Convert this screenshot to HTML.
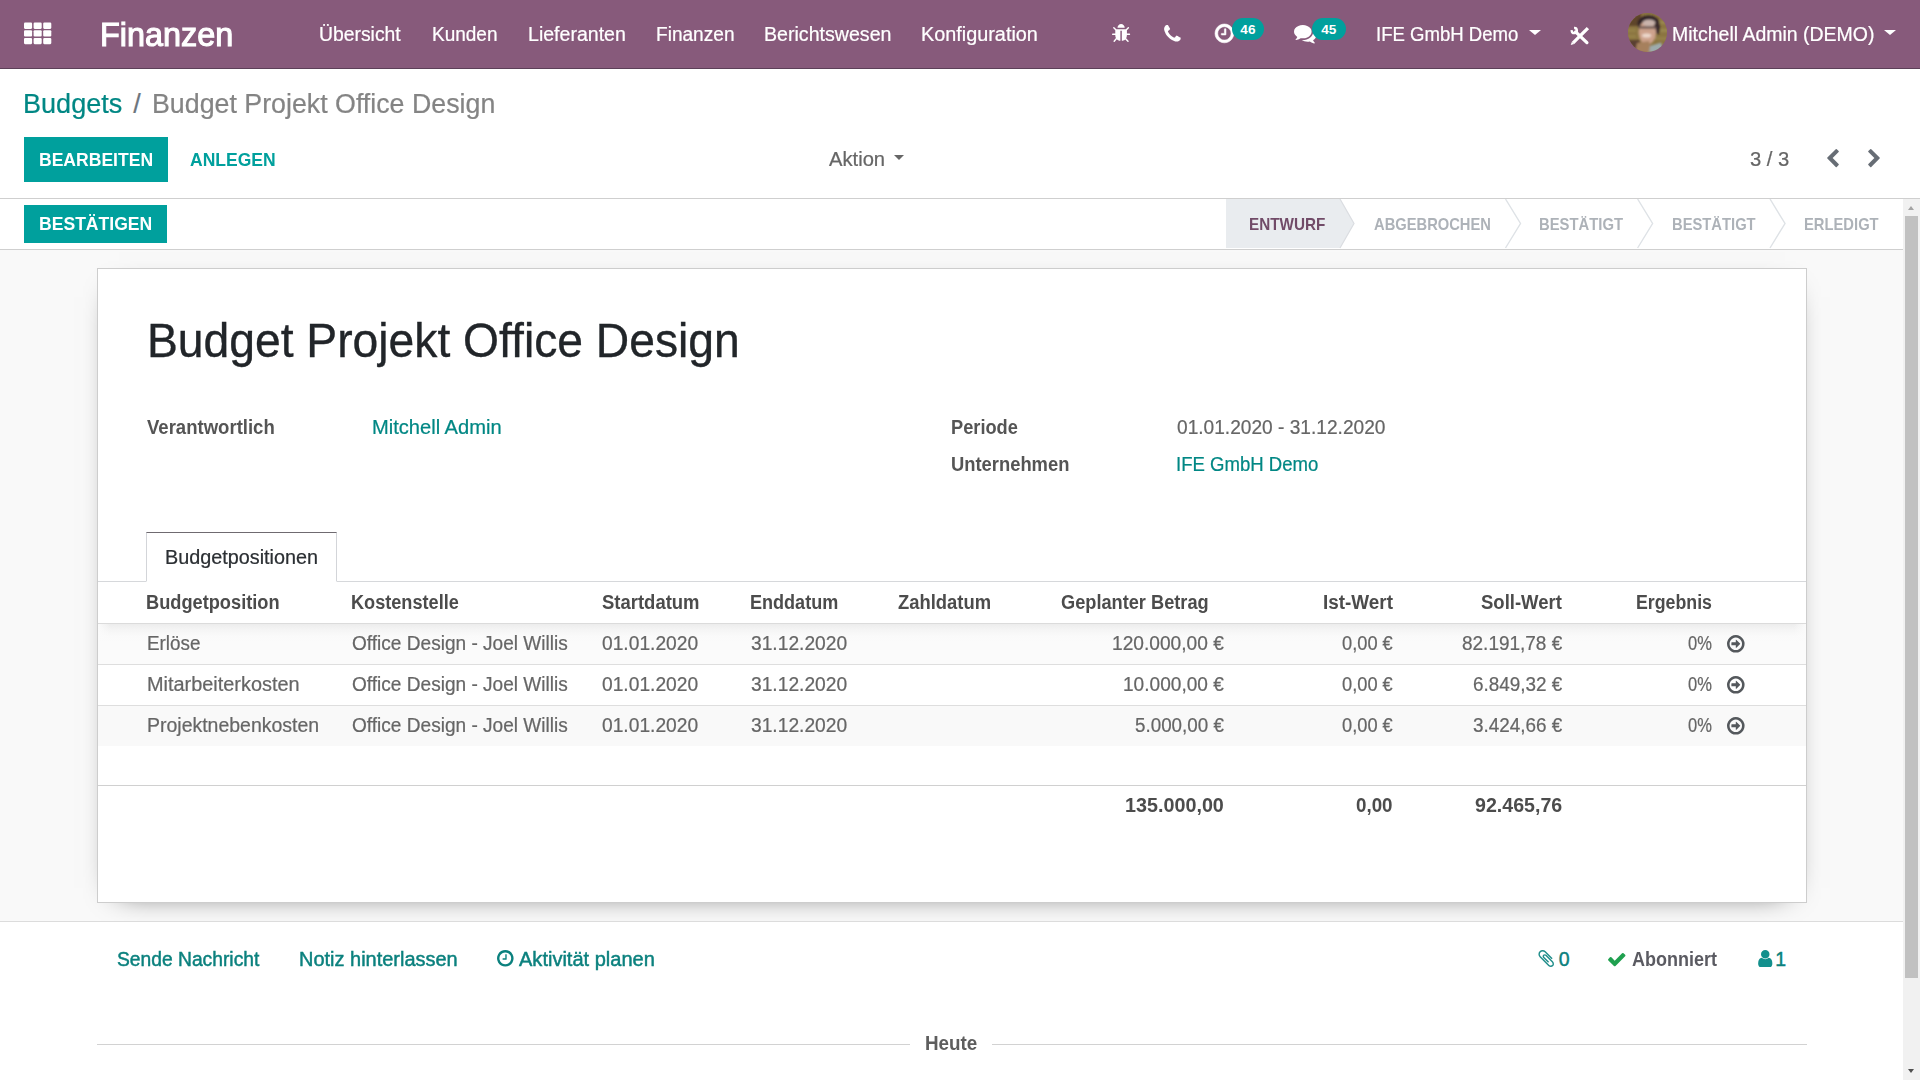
<!DOCTYPE html>
<html lang="de">
<head>
<meta charset="utf-8">
<title>Budget Projekt Office Design - Odoo</title>
<style>

*{box-sizing:border-box;margin:0;padding:0}
html,body{width:1920px;height:1080px;overflow:hidden;background:#fff}
body{font-family:"Liberation Sans",sans-serif;font-size:19.5px;color:#666;position:relative;-webkit-font-smoothing:antialiased}
a{text-decoration:none;color:inherit}
ul{list-style:none}
.abs{position:absolute;white-space:nowrap}
.abs,.txt,.o_dropdown_toggler_btn,.o_pager,.o_arrow_button,.o_form_sheet h1,.o_form_label,.o_field,.nav-link span,.o_list_table span,.lnk,.lnk2,.follow{transform-origin:0 50%;display:block}
svg{display:block;position:absolute;overflow:visible}

/* ---------- top navbar ---------- */
.o_main_navbar{position:absolute;left:0;top:0;width:1920px;height:69px;background:#875a7b;border-bottom:1px solid #5c4058;color:#fff}
.o_main_navbar .txt{position:absolute;white-space:nowrap;color:#fff;line-height:30px;font-size:19.5px}
.o_menu_brand{font-size:33px!important;line-height:44px!important}
.badge{position:absolute;top:18.2px;height:21.6px;border-radius:11px;background:#00a09d;color:#fff;font-weight:700;font-size:13.6px;line-height:21.6px;padding-top:0.8px;text-align:center}
.caret{position:absolute;width:0;height:0;border-left:6px solid transparent;border-right:6px solid transparent;border-top:5.8px solid #fff}

/* ---------- control panel ---------- */
.o_control_panel{position:absolute;left:0;top:69px;width:1920px;height:130px;background:#fff;border-bottom:1px solid #cfcfcf}
.breadcrumb{position:absolute;left:0;top:0;font-size:27px;line-height:40px;white-space:nowrap}
.breadcrumb li{position:absolute;top:0;white-space:nowrap}
.breadcrumb a{color:#008784}
.breadcrumb .sep{color:#6c757d}
.breadcrumb .active{color:#848484}
.btn{position:absolute;white-space:nowrap;font-size:18.2px;font-weight:700;text-transform:uppercase;text-align:center}
.btn-primary{background:#00a09d;color:#fff}
.btn-secondary{color:#00a09d;background:#fff}
.o_dropdown_toggler_btn{position:absolute;white-space:nowrap;color:#666;font-size:19.5px;line-height:30px}
.o_pager{position:absolute;white-space:nowrap;color:#666;line-height:30px}

/* ---------- scrollable content ---------- */
.o_content{position:absolute;left:0;top:199px;width:1903px;height:881px;background:#f9f9f9;overflow:hidden}
.o_form_statusbar{position:absolute;left:0;top:0;width:1903px;height:51px;background:#fff;border-bottom:1px solid #cfcfcf}
.o_statusbar_status{position:absolute;top:0;left:0;height:50px}
.o_arrow_button{position:absolute;top:0;white-space:nowrap;font-size:17px;font-weight:700;line-height:50px;color:#adb2b8;text-transform:uppercase}
.o_arrow_button.current{color:#714b68}

.o_form_sheet{position:absolute;left:97px;top:69px;width:1710px;height:635px;background:#fff;border:1px solid #cdcdcd;box-shadow:0 7px 30px -22px #000}
.o_form_sheet h1{position:absolute;font-weight:400;color:#212529;white-space:nowrap;font-size:47.5px;line-height:60px}
.o_form_label{position:absolute;font-weight:700;color:#555;white-space:nowrap;line-height:30px}
.o_field{position:absolute;white-space:nowrap;line-height:30px;color:#666}
.o_form_uri{color:#008784}
.nav-tabs{position:absolute;left:0;top:263px;width:1708px;height:50px;border-bottom:1px solid #d6d8db}
.nav-link{position:absolute;left:48px;top:0;width:191px;height:50px;border:1px solid #d3d5d9;border-top-color:#6f6a70;border-bottom-color:#fff;background:#fff;color:#2b2f33;line-height:30px}
.nav-link span{position:absolute;white-space:nowrap}

table.o_list_table{position:absolute;left:0;top:313px;width:1708px;border-collapse:separate;border-spacing:0;table-layout:fixed;font-size:19.5px}
.o_list_table th,.o_list_table td{padding:0;line-height:30px;white-space:nowrap;overflow:visible;text-align:left;vertical-align:top;font-weight:400;height:40px}
.o_list_table thead th{height:41px;font-weight:700;color:#4c4c4c}
.o_list_table tbody td{border-top:1px solid #dedede;height:41px}
.o_list_table tbody tr:first-child td{border-top-color:#dbdbdb}
.o_list_table tbody tr:first-child{background:linear-gradient(to right,#fbfbfb 0,rgba(251,251,251,0) 12px,rgba(251,251,251,0) 1696px,#fbfbfb 1708px),linear-gradient(#eaeaea 0,#eeeeee 2px,#f5f5f5 7px,#fafafa 13px,#fbfbfb 20px,#fbfbfb)}
.o_list_table tbody tr:nth-child(3){background:#f9f9f9}
.o_list_table .num{text-align:right}
.o_list_table span{display:inline-block!important;vertical-align:top;line-height:30px;position:relative}
.o_list_table tfoot td{border-top:1px solid #d0d0d0;font-weight:700;color:#4c4c4c;height:42px}
.o_list_table tr.spacer td{height:39px;border-top:0}
.o_list_table tr.spacer{border-top:none!important;background:#fff}
.icn{position:relative;display:inline-block;width:18px;height:18px;vertical-align:top}

/* ---------- chatter ---------- */
.o_chatter{position:absolute;left:0;top:722px;width:1903px;height:159px;background:#fff;border-top:1px solid #dcdcdc}
.o_chatter .lnk{position:absolute;white-space:nowrap;color:#0b817e;line-height:30px;-webkit-text-stroke:0.45px #0b817e}
.o_chatter .lnk2{position:absolute;white-space:nowrap;color:#008784;line-height:30px}
.o_chatter .follow{position:absolute;white-space:nowrap;color:#5b5b62;font-weight:700;line-height:30px}
.o_thread_date_separator{position:absolute;left:97px;top:122px;width:1710px;height:1px;background:#d2d2d2}
.o_thread_date{position:absolute;left:813px;top:-15px;width:82px;height:30px;background:#fff;text-align:center;font-weight:700;color:#5e5e5e;line-height:30px;white-space:nowrap}

/* ---------- fake scrollbar ---------- */
.sb{position:absolute;left:1903px;top:199px;width:17px;height:881px;background:#f1f1f1}
.sb .thumb{position:absolute;left:2px;top:17px;width:13px;height:762px;background:#c1c1c1}
.sb .up{position:absolute;left:5px;top:7px;width:0;height:0;border-left:3.5px solid transparent;border-right:3.5px solid transparent;border-bottom:4px solid #a3a3a3}
.sb .down{position:absolute;left:5px;top:870px;width:0;height:0;border-left:3.5px solid transparent;border-right:3.5px solid transparent;border-top:4px solid #505050}

/* Roboto regular renders a touch heavier than Liberation Sans: thicken slightly */
.o_main_navbar .txt,.breadcrumb .abs,.o_dropdown_toggler_btn,.o_pager,.o_field,.nav-link span,.o_list_table tbody span{-webkit-text-stroke:0.22px currentColor}
.o_form_sheet h1{-webkit-text-stroke:0.35px currentColor}
.o_list_table thead span{top:5px}
.o_list_table tbody span{top:4px}
.o_list_table tfoot span{top:4px}

</style>
</head>
<body>
<header class="o_main_navbar">
<a class="o_menu_toggle" title="Anwendungen"><svg class="fa fa-th" style="left:0;top:0;width:69px;height:69px" viewBox="0 0 69 69"><rect x="24.0" y="22.6" width="8.1" height="6.3" rx="1.1" fill="#fff"/><rect x="33.6" y="22.6" width="8.1" height="6.3" rx="1.1" fill="#fff"/><rect x="43.2" y="22.6" width="8.1" height="6.3" rx="1.1" fill="#fff"/><rect x="24.0" y="30.25" width="8.1" height="6.3" rx="1.1" fill="#fff"/><rect x="33.6" y="30.25" width="8.1" height="6.3" rx="1.1" fill="#fff"/><rect x="43.2" y="30.25" width="8.1" height="6.3" rx="1.1" fill="#fff"/><rect x="24.0" y="37.9" width="8.1" height="6.3" rx="1.1" fill="#fff"/><rect x="33.6" y="37.9" width="8.1" height="6.3" rx="1.1" fill="#fff"/><rect x="43.2" y="37.9" width="8.1" height="6.3" rx="1.1" fill="#fff"/></svg></a>
<a class="txt o_menu_brand" style="left:100.44px;top:13px;line-height:44px;transform:scaleX(0.981);-webkit-text-stroke:1.1px #fff;">Finanzen</a>
<ul class="o_menu_sections">
<li><a class="txt" style="left:319.06px;top:19px;line-height:30px;transform:scaleX(0.992);">Übersicht</a></li>
<li><a class="txt" style="left:432.38px;top:19px;line-height:30px;transform:scaleX(0.9742);">Kunden</a></li>
<li><a class="txt" style="left:528.05px;top:19px;line-height:30px;transform:scaleX(1.0028);">Lieferanten</a></li>
<li><a class="txt" style="left:655.57px;top:19px;line-height:30px;transform:scaleX(0.9786);">Finanzen</a></li>
<li><a class="txt" style="left:763.74px;top:19px;line-height:30px;transform:scaleX(1.0051);">Berichtswesen</a></li>
<li><a class="txt" style="left:920.83px;top:19px;line-height:30px;transform:scaleX(1.017);">Konfiguration</a></li>
</ul>
<ul class="o_menu_systray">
<li><svg class="fa fa-bug" viewBox="96 64 1600 1568" style="left:1111.7px;top:23.6px;width:18.2px;height:18.0px;"><path fill="#fff" d="M1696 960q0 26-19 45t-45 19h-224q0 171-67 290l208 209q19 19 19 45t-19 45q-18 19-45 19t-45-19l-198-197q-5 5-15 13t-42 28.500-65 36.500-82 29-97 13v-896h-128v896q-51 0-101.5-13.5t-87-33-66-39-43.5-32.5l-15-14-183 207q-20 21-48 21-24 0-43-16-19-18-20.5-44.5t15.5-46.5l202-227q-58-114-58-274h-224q-26 0-45-19t-19-45 19-45 45-19h224v-294l-173-173q-19-19-19-45t19-45 45-19 45 19l173 173h844l173-173q19-19 45-19t45 19 19 45-19 45l-173 173v294h224q26 0 45 19t19 45zm-480-576h-640q0-133 93.500-226.500t226.500-93.500 226.500 93.500 93.500 226.500z"/></svg></li>
<li><svg class="fa fa-phone" viewBox="192 128 1408 1408" style="left:1164.2px;top:24.8px;width:16.8px;height:16.6px;"><path fill="#fff" d="M1600 1240q0 27-10 70.5t-21 68.5q-21 50-122 106-94 51-186 51-27 0-53-3.500t-57.5-12.5-47-14.5-55.5-20.5-49-18q-98-35-175-83-127-79-264-216t-216-264q-48-77-83-175-3-9-18-49t-20.5-55.5-14.5-47-12.5-57.5-3.500-53q0-92 51-186 56-101 106-122 25-11 68.5-21t70.5-10q14 0 21 3 18 6 53 76 11 19 30 54t35 63.5 31 53.5q3 4 17.5 25t21.5 35.5 7 28.5q0 20-28.500 50t-62 55-62 53-28.500 46q0 9 5 22.5t8.500 20.5 14 24 11.5 19q76 137 174 235t235 174q2 1 19 11.5t24 14 20.5 8.500 22.5 5q18 0 46-28.500t53-62 55-62 50-28.500q14 0 28.500 7t35.5 21.5 25 17.5q25 15 53.5 31t63.5 35 54 30q70 35 76 53 3 7 3 21z"/></svg></li>
<li><svg class="fa fa-clock-o" viewBox="128 128 1536 1536" style="left:1214.6px;top:23.5px;width:18.8px;height:18.8px;"><path fill="#fff" stroke="#fff" stroke-width="46" d="M1024 544v448q0 14-9 23t-23 9h-320q-14 0-23-9t-9-23v-64q0-14 9-23t23-9h224v-352q0-14 9-23t23-9h64q14 0 23 9t9 23zm416 352q0-148-73-273t-198-198-273-73-273 73-198 198-73 273 73 273 198 198 273 73 273-73 198-198 73-273zm224 0q0 209-103 385.5t-279.5 279.5-385.5 103-385.5-103-279.5-279.5-103-385.5 103-385.5 279.5-279.5 385.5-103 385.5 103 279.5 279.5 103 385.5z"/></svg><span class="badge" style="left:1231.8px;width:32.2px">46</span></li>
<li><svg class="fa fa-comments" viewBox="0 256 1792 1408.1" preserveAspectRatio="none" style="left:1293.6px;top:24.5px;width:22.4px;height:18.4px;"><path fill="#fff" d="M1408 768q0 139-94 257t-256.500 186.500-353.500 68.500q-86 0-176-16-124 88-278 128-36 9-86 16h-3q-11 0-20.5-8t-11.5-21q-1-3-1-6.500t.5-6.500 2-6l2.500-5 3.500-5.500 4-5 4.500-5 4-4.500q5-6 23-25t26-29.500 22.5-29 25-38.500 20.5-44q-124-72-195-177t-71-224q0-139 94-257t256.500-186.500 353.500-68.500 353.500 68.500 256.500 186.500 94 257zm384 256q0 120-71 224.500t-195 176.500q10 24 20.500 44t25 38.500 22.5 29 26 29.500 23 25q1 1 4 4.500t4.500 5 4 5 3.500 5.500l2.500 5 2 6 .5 6.500-1 6.500q-3 14-13 22t-22 7q-50-7-86-16-154-40-278-128-90 16-176 16-271 0-472-132 58 4 88 4 161 0 309-45t264-129q125-92 192-212t67-254q0-77-23-152 129 71 204 178t75 230z"/></svg><span class="badge" style="left:1311.8px;width:34px">45</span></li>
<li><a class="txt" style="left:1376.4px;top:19px;line-height:30px;transform:scaleX(0.9523);">IFE GmbH Demo</a><span class="caret" style="left:1529px;top:30px"></span></li>
<li><svg class="fa fa-tools" style="left:1564px;top:20px;width:32px;height:32px" viewBox="0 0 32 32"><path d="M23.9 8.1 L9.1 22.9" stroke="#fff" stroke-width="3.3" fill="none"/><path d="M7.93 21.73 L10.27 24.07 L6.7 25.1z" fill="#fff"/><path d="M11.6 11.9 L22.9 22.6" stroke="#fff" stroke-width="3.3" stroke-linecap="round" fill="none"/><circle cx="10.3" cy="10.6" r="2.55" fill="none" stroke="#fff" stroke-width="2.4" stroke-dasharray="12.4 3.62" transform="rotate(-95 10.3 10.6)"/></svg></li>
<li><svg class="o_user_avatar" viewBox="0 0 39 39" style="left:1628px;top:13px;width:39px;height:39px"><defs><clipPath id="avc"><circle cx="19.5" cy="19.5" r="19.5"/></clipPath><filter id="avb" x="-20%" y="-20%" width="140%" height="140%"><feGaussianBlur stdDeviation="1"/></filter></defs><g clip-path="url(#avc)"><rect width="39" height="39" fill="#8b7540"/><g filter="url(#avb)"><rect x="-2" y="-2" width="15" height="15" fill="#5e452c"/><rect x="-2" y="27" width="14" height="14" fill="#5a3f30"/><rect x="27" y="8" width="14" height="3" fill="#9a8850"/><rect x="27" y="16" width="14" height="3" fill="#9a8850"/><rect x="27" y="24" width="14" height="3" fill="#94814a"/><rect x="-2" y="16" width="10" height="3" fill="#94814a"/><rect x="-2" y="22" width="10" height="3" fill="#94814a"/><ellipse cx="20.5" cy="10" rx="11" ry="7.5" fill="#2e2226"/><ellipse cx="29.6" cy="15" rx="2.4" ry="6.5" fill="#37282a"/><ellipse cx="19.3" cy="19.5" rx="8.8" ry="12" fill="#cda28c"/><ellipse cx="21" cy="9.8" rx="6.4" ry="3.4" fill="#c9b3ac"/><rect x="10.5" y="13.4" width="18" height="2.1" fill="#5b4b4c"/><ellipse cx="18.6" cy="22.6" rx="4.6" ry="2" fill="#edd8cc"/><path d="M9 30 L21 28 L24 40 L7 40z" fill="#a6805d"/><path d="M22 33 L33 29.500 L37 40 L21 40z" fill="#9dabac"/></g></g></svg><a class="txt" style="left:1672.15px;top:19px;line-height:30px;transform:scaleX(0.9993);">Mitchell Admin (DEMO)</a><span class="caret" style="left:1883.8px;top:30px"></span></li>
</ul>
</header>
<div class="o_control_panel">
<ol class="breadcrumb">
<li class="breadcrumb-item"><a class="abs" style="left:23.25px;top:15px;line-height:40px;transform:scaleX(1.0023);">Budgets</a></li>
<li class="sep"><span class="abs sep" style="left:133.19px;top:15px;line-height:40px;transform:scaleX(1);">/</span></li>
<li class="breadcrumb-item active"><span class="abs active" style="left:151.67px;top:15px;line-height:40px;transform:scaleX(0.9916);">Budget Projekt Office Design</span></li>
</ol>
<div class="o_cp_buttons">
<button class="btn btn-primary" style="left:24px;top:68px;width:144px;height:45px;border:0"><span class="abs" style="left:15.19px;top:8px;line-height:30px;transform:scaleX(0.9647);">BEARBEITEN</span></button>
<button class="btn btn-secondary" style="left:172px;top:68px;width:120px;height:45px;border:0"><span class="abs" style="left:17.95px;top:8px;line-height:30px;transform:scaleX(0.9637);">ANLEGEN</span></button>
</div>
<div class="o_cp_sidebar"><span class="o_dropdown_toggler_btn" style="left:828.8px;top:75px;line-height:30px;transform:scaleX(1.0345);">Aktion</span><span class="caret" style="left:894.2px;top:86.2px;border-top-color:#666;border-left-width:5.6px;border-right-width:5.6px;border-top-width:5px"></span></div>
<div class="o_cp_pager"><span class="o_pager" style="left:1749.8px;top:75px;line-height:30px;transform:scaleX(1.0375);">3 / 3</span><svg class="fa fa-chev-l" viewBox="410 26 1036 1612" style="left:1826.5px;top:80px;width:12.0px;height:18.2px;"><path fill="#676d75" d="M1427 301l-531 531 531 531q19 19 19 45t-19 45l-166 166q-19 19-45 19t-45-19l-742-742q-19-19-19-45t19-45l742-742q19-19 45-19t45 19l166 166q19 19 19 45t-19 45z"/></svg><svg class="fa fa-chev-r" viewBox="346 26 1036 1612" style="left:1867.7px;top:80px;width:12.0px;height:18.2px;"><path fill="#676d75" d="M1363 877l-742 742q-19 19-45 19t-45-19l-166-166q-19-19-19-45t19-45l531-531-531-531q-19-19-19-45t19-45l166-166q19-19 45-19t45 19l742 742q19 19 19 45t-19 45z"/></svg></div>
</div>
<div class="o_content">
<div class="o_form_statusbar">
<button class="btn btn-primary" style="left:24px;top:6px;width:143px;height:37.5px;border:0"><span class="abs" style="left:15.18px;top:4px;line-height:30px;transform:scaleX(0.9662);">BESTÄTIGEN</span></button>
<div class="o_statusbar_status">
<svg style="left:0;top:0;width:1903px;height:50px" viewBox="0 0 1903 50"><polygon points="1226,0 1340,0 1354,24.5 1340,49 1226,49" fill="#e9ecef"/><polyline points="1340,0 1354,24.5 1340,49" fill="none" stroke="#dadde1" stroke-width="1.2"/><polyline points="1505.5,0 1520.5,24.5 1505.5,49" fill="none" stroke="#dee2e6" stroke-width="1.4"/><polyline points="1637.6,0 1652.6,24.5 1637.6,49" fill="none" stroke="#dee2e6" stroke-width="1.4"/><polyline points="1770,0 1785,24.5 1770,49" fill="none" stroke="#dee2e6" stroke-width="1.4"/></svg>
<span class="o_arrow_button current" style="left:1249.35px;top:1px;line-height:50px;transform:scaleX(0.8971);">ENTWURF</span>
<span class="o_arrow_button" style="left:1373.95px;top:1px;line-height:50px;transform:scaleX(0.8658);">ABGEBROCHEN</span>
<span class="o_arrow_button" style="left:1538.78px;top:1px;line-height:50px;transform:scaleX(0.8722);">BESTÄTIGT</span>
<span class="o_arrow_button" style="left:1671.88px;top:1px;line-height:50px;transform:scaleX(0.8681);">BESTÄTIGT</span>
<span class="o_arrow_button" style="left:1804.28px;top:1px;line-height:50px;transform:scaleX(0.8683);">ERLEDIGT</span>
</div></div>
<div class="o_form_sheet">
<h1 style="left:48.78px;top:42px;line-height:60px;transform:scaleX(0.9733);">Budget Projekt Office Design</h1>
<div class="o_group">
<label class="o_form_label" style="left:49.05px;top:143px;line-height:30px;transform:scaleX(0.9508);">Verantwortlich</label>
<a class="o_field o_form_uri" style="left:273.62px;top:143px;line-height:30px;transform:scaleX(1.0309);">Mitchell Admin</a>
<label class="o_form_label" style="left:853.41px;top:143px;line-height:30px;transform:scaleX(0.9351);">Periode</label>
<span class="o_field" style="left:1079.35px;top:143px;line-height:30px;transform:scaleX(0.9808);">01.01.2020 - 31.12.2020</span>
<label class="o_form_label" style="left:853.41px;top:180px;line-height:30px;transform:scaleX(0.942);">Unternehmen</label>
<a class="o_field o_form_uri" style="left:1078.4px;top:180px;line-height:30px;transform:scaleX(0.9523);">IFE GmbH Demo</a>
</div>
<ul class="nav-tabs"><li class="nav-link active"><span style="left:18.23px;top:9px;line-height:30px;transform:scaleX(1.0156);">Budgetpositionen</span></li></ul>
<table class="o_list_table"><colgroup><col style="width:249px"><col style="width:250px"><col style="width:149px"><col style="width:147px"><col style="width:163px"><col style="width:174px"><col style="width:168px"><col style="width:169px"><col style="width:150px"><col style="width:89px"></colgroup>
<thead><tr>
<th><span style="margin-left:48.22px;transform:scaleX(0.9343)">Budgetposition</span></th>
<th><span style="margin-left:3.92px;transform:scaleX(0.9296)">Kostenstelle</span></th>
<th><span style="margin-left:4.55px;transform:scaleX(0.9474)">Startdatum</span></th>
<th><span style="margin-left:3.72px;transform:scaleX(0.9255)">Enddatum</span></th>
<th><span style="margin-left:5.25px;transform:scaleX(0.9435)">Zahldatum</span></th>
<th><span style="margin-left:5.45px;transform:scaleX(0.9332)">Geplanter Betrag</span></th>
<th><span style="margin-left:92.58px;transform:scaleX(0.9688)">Ist-Wert</span></th>
<th><span style="margin-left:83.15px;transform:scaleX(0.9482)">Soll-Wert</span></th>
<th><span style="margin-left:68.84px;transform:scaleX(0.9105)">Ergebnis</span></th>
<th></th>
</tr></thead><tbody>
<tr><td><span style="margin-left:48.68px;transform:scaleX(0.9675)">Erlöse</span></td><td><span style="margin-left:5.45px;transform:scaleX(0.978)">Office Design - Joel Willis</span></td><td><span style="margin-left:5.15px;transform:scaleX(0.985)">01.01.2020</span></td><td><span style="margin-left:5.25px;transform:scaleX(0.985)">31.12.2020</span></td><td></td><td><span style="margin-left:56.47px;transform:scaleX(0.9822)">120.000,00 €</span></td><td><span style="margin-left:112.15px;transform:scaleX(0.9361)">0,00 €</span></td><td><span style="margin-left:64.05px;transform:scaleX(0.9731)">82.191,78 €</span></td><td><span style="margin-left:121.35px;transform:scaleX(0.8474)">0%</span></td><td><span class="icn" style="margin-left:10.4px"><svg class="fa fa-arrow-circle-o-right" viewBox="128 128 1536 1536" style="left:0px;top:0px;width:17.6px;height:17.6px;top:6.8px;"><path fill="#54585c" d="M1280 896q0 14-9 23l-320 320q-9 9-23 9-13 0-22.5-9.5t-9.500-22.5v-192h-352q-13 0-22.5-9.5t-9.500-22.5v-192q0-13 9.500-22.5t22.5-9.5h352v-192q0-14 9-23t23-9q12 0 24 10l319 319q9 9 9 23zm160 0q0-148-73-273t-198-198-273-73-273 73-198 198-73 273 73 273 198 198 273 73 273-73 198-198 73-273zm224 0q0 209-103 385.5t-279.5 279.5-385.5 103-385.5-103-279.5-279.5-103-385.5 103-385.5 279.5-279.5 385.5-103 385.5 103 279.5 279.5 103 385.5z"/></svg></span></td></tr>
<tr><td><span style="margin-left:48.63px;transform:scaleX(1.0201)">Mitarbeiterkosten</span></td><td><span style="margin-left:5.45px;transform:scaleX(0.978)">Office Design - Joel Willis</span></td><td><span style="margin-left:5.15px;transform:scaleX(0.985)">01.01.2020</span></td><td><span style="margin-left:5.25px;transform:scaleX(0.985)">31.12.2020</span></td><td></td><td><span style="margin-left:67.47px;transform:scaleX(0.9788)">10.000,00 €</span></td><td><span style="margin-left:112.15px;transform:scaleX(0.9361)">0,00 €</span></td><td><span style="margin-left:75.05px;transform:scaleX(0.9683)">6.849,32 €</span></td><td><span style="margin-left:121.35px;transform:scaleX(0.8474)">0%</span></td><td><span class="icn" style="margin-left:10.4px"><svg class="fa fa-arrow-circle-o-right" viewBox="128 128 1536 1536" style="left:0px;top:0px;width:17.6px;height:17.6px;top:6.8px;"><path fill="#54585c" d="M1280 896q0 14-9 23l-320 320q-9 9-23 9-13 0-22.5-9.5t-9.500-22.5v-192h-352q-13 0-22.5-9.5t-9.500-22.5v-192q0-13 9.500-22.5t22.5-9.5h352v-192q0-14 9-23t23-9q12 0 24 10l319 319q9 9 9 23zm160 0q0-148-73-273t-198-198-273-73-273 73-198 198-73 273 73 273 198 198 273 73 273-73 198-198 73-273zm224 0q0 209-103 385.5t-279.5 279.5-385.5 103-385.5-103-279.5-279.5-103-385.5 103-385.5 279.5-279.5 385.5-103 385.5 103 279.5 279.5 103 385.5z"/></svg></span></td></tr>
<tr><td><span style="margin-left:48.65px;transform:scaleX(0.9987)">Projektnebenkosten</span></td><td><span style="margin-left:5.45px;transform:scaleX(0.978)">Office Design - Joel Willis</span></td><td><span style="margin-left:5.15px;transform:scaleX(0.985)">01.01.2020</span></td><td><span style="margin-left:5.25px;transform:scaleX(0.985)">31.12.2020</span></td><td></td><td><span style="margin-left:79.35px;transform:scaleX(0.965)">5.000,00 €</span></td><td><span style="margin-left:112.15px;transform:scaleX(0.9361)">0,00 €</span></td><td><span style="margin-left:75.05px;transform:scaleX(0.9683)">3.424,66 €</span></td><td><span style="margin-left:121.35px;transform:scaleX(0.8474)">0%</span></td><td><span class="icn" style="margin-left:10.4px"><svg class="fa fa-arrow-circle-o-right" viewBox="128 128 1536 1536" style="left:0px;top:0px;width:17.6px;height:17.6px;top:6.8px;"><path fill="#54585c" d="M1280 896q0 14-9 23l-320 320q-9 9-23 9-13 0-22.5-9.5t-9.500-22.5v-192h-352q-13 0-22.5-9.5t-9.500-22.5v-192q0-13 9.500-22.5t22.5-9.5h352v-192q0-14 9-23t23-9q12 0 24 10l319 319q9 9 9 23zm160 0q0-148-73-273t-198-198-273-73-273 73-198 198-73 273 73 273 198 198 273 73 273-73 198-198 73-273zm224 0q0 209-103 385.5t-279.5 279.5-385.5 103-385.5-103-279.5-279.5-103-385.5 103-385.5 279.5-279.5 385.5-103 385.5 103 279.5 279.5 103 385.5z"/></svg></span></td></tr>
<tr class="spacer"><td colspan="10"></td></tr>
</tbody><tfoot><tr><td></td><td></td><td></td><td></td><td></td><td><span style="margin-left:69.44px;transform:scaleX(1.0128)">135.000,00</span></td><td><span style="margin-left:126.35px;transform:scaleX(0.963)">0,00</span></td><td><span style="margin-left:77.05px;transform:scaleX(1.0055)">92.465,76</span></td><td></td><td></td></tr></tfoot></table>
</div>
<div class="o_chatter">
<a class="lnk" style="left:116.75px;top:22px;line-height:30px;transform:scaleX(0.9872);">Sende Nachricht</a>
<a class="lnk" style="left:299.33px;top:22px;line-height:30px;transform:scaleX(1.0238);">Notiz hinterlassen</a>
<svg class="fa fa-clock-o" viewBox="128 128 1536 1536" style="left:497px;top:28.3px;width:16.6px;height:16.6px;"><path fill="#0b817e" d="M1024 544v448q0 14-9 23t-23 9h-320q-14 0-23-9t-9-23v-64q0-14 9-23t23-9h224v-352q0-14 9-23t23-9h64q14 0 23 9t9 23zm416 352q0-148-73-273t-198-198-273-73-273 73-198 198-73 273 73 273 198 198 273 73 273-73 198-198 73-273zm224 0q0 209-103 385.5t-279.5 279.5-385.5 103-385.5-103-279.5-279.5-103-385.5 103-385.5 279.5-279.5 385.5-103 385.5 103 279.5 279.5 103 385.5z"/></svg>
<a class="lnk" style="left:518.85px;top:22px;line-height:30px;transform:scaleX(1.0274);">Aktivität planen</a>
<svg class="fa fa-paperclip" viewBox="4 132 1400 1528" style="left:1538.3px;top:28px;width:16.4px;height:17px;"><path fill="#1f8d8a" d="M1404 1385q0 117-79 196t-196 79q-135 0-235-100l-777-776q-113-115-113-271 0-159 110-270t269-111q158 0 273 113l605 606q10 10 10 22 0 16-30.500 46.500t-46.500 30.500q-13 0-23-10l-606-607q-79-77-181-77-106 0-179 75t-73 181q0 105 76 181l776 777q63 63 145 63 64 0 106-42t42-106q0-82-63-145l-581-581q-26-24-60-24-29 0-48 19t-19 48q0 32 25 59l410 410q10 10 10 22 0 16-31 47t-47 31q-12 0-22-10l-410-410q-63-61-63-149 0-82 57-139t139-57q88 0 149 63l581 581q100 98 100 235z"/></svg>
<span class="lnk" style="left:1558.64px;top:22px;line-height:30px;transform:scaleX(1);">0</span>
<svg class="fa fa-check" viewBox="121 334 1550 1188" style="left:1608.3px;top:30.5px;width:17.5px;height:13.3px;"><path fill="#1fa04f" d="M1671 566q0 40-28 68l-724 724-136 136q-28 28-68 28t-68-28l-136-136-362-362q-28-28-28-68t28-68l136-136q28-28 68-28t68 28l294 295 656-657q28-28 68-28t68 28l136 136q28 28 28 68z"/></svg>
<span class="follow" style="left:1632.4px;top:22px;line-height:30px;transform:scaleX(0.9224);">Abonniert</span>
<svg class="fa fa-user" viewBox="256 128 1280 1536" style="left:1757.5px;top:28px;width:14.5px;height:17px;"><path fill="#13908d" d="M1536 1399q0 109-62.5 187t-150.5 78h-854q-88 0-150.5-78t-62.5-187q0-85 8.5-160.5t31.5-152 58.5-131 94-89 134.5-34.5q131 128 313 128t313-128q76 0 134.5 34.5t94 89 58.5 131 31.5 152 8.5 160.5zm-256-887q0 159-112.5 271.5t-271.5 112.5-271.5-112.5-112.5-271.5 112.5-271.5 271.5-112.5 271.5 112.5 112.5 271.5z"/></svg>
<span class="lnk" style="left:1775.14px;top:22px;line-height:30px;transform:scaleX(1);">1</span>
<div class="o_thread_date_separator"><span class="o_thread_date"><span class="abs" style="left:15.33px;top:-1px;line-height:30px;transform:scaleX(0.9655);">Heute</span></span></div>
</div>
</div>
<div class="sb"><span class="up"></span><span class="thumb"></span><span class="down"></span></div>
</body>
</html>
